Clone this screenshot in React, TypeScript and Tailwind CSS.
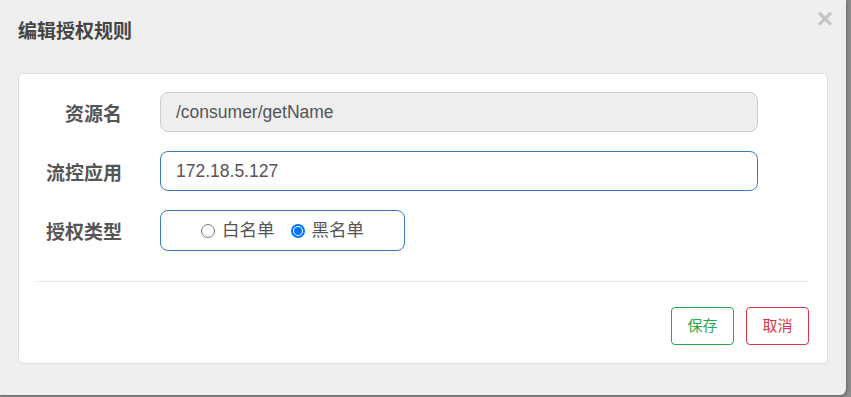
import React, { useState } from 'react';

const font = { fontFamily: '"Liberation Sans", "Noto Sans CJK SC", sans-serif' };

const Radio: React.FC<{ checked: boolean; label: string; onClick: () => void }> = ({ checked, label, onClick }) => (
  <label className="flex items-center cursor-pointer" onClick={onClick}>
    {checked ? (
      <span className="w-[14px] h-[14px] rounded-full border-[2px] border-[#0075ff] bg-white flex items-center justify-center">
        <span className="w-[8px] h-[8px] rounded-full bg-[#0075ff]" />
      </span>
    ) : (
      <span className="w-[14px] h-[14px] rounded-full border border-[#767676] bg-white" />
    )}
    <span className="ml-[7px] text-[17.5px] text-[#555]">{label}</span>
  </label>
);

export default function App() {
  const [mode, setMode] = useState<'white' | 'black'>('black');

  return (
    <div className="w-[851px] h-[397px] bg-[#8e8e8e] overflow-hidden" style={font}>
      <div className="w-[846px] h-[395px] bg-[#efefef] rounded-br-[6px] shadow-[1px_1px_3px_rgba(0,0,0,0.3)] relative">
        {/* header */}
        <div className="h-[73px] pl-[18px] flex items-center pb-[8px]">
          <h3 className="text-[19px] font-bold text-[#444]">编辑授权规则</h3>
        </div>
        <button className="absolute right-[13px] top-[5px] text-[28px] font-bold leading-none text-[#c4c4c4]">×</button>

        {/* body */}
        <div className="mx-[18px] h-[291px] bg-white border border-[#dddddd] rounded-[5px] px-[18px] pt-[18px]">
          <div className="flex flex-col gap-[19px]">
            <div className="flex items-center">
              <label className="w-[85px] pt-[6px] text-right text-[19px] font-bold text-[#555]">资源名</label>
              <div className="ml-[38px] w-[598px] h-[40px] bg-[#eeeeee] border border-[#cccccc] rounded-[8px] flex items-center px-[15px] text-[17.5px] text-[#555]">
                /consumer/getName
              </div>
            </div>
            <div className="flex items-center">
              <label className="w-[85px] pt-[6px] text-right text-[19px] font-bold text-[#555]">流控应用</label>
              <div className="ml-[38px] w-[598px] h-[40px] bg-white border border-[#3a7cbd] rounded-[8px] flex items-center px-[15px] text-[17.5px] text-[#555]">
                172.18.5.127
              </div>
            </div>
            <div className="flex items-center">
              <label className="w-[85px] pt-[6px] text-right text-[19px] font-bold text-[#555]">授权类型</label>
              <div className="ml-[38px] w-[245px] h-[41px] bg-white border border-[#3a7cbd] rounded-[8px] flex items-center justify-center gap-[16px]">
                <Radio checked={mode === 'white'} label="白名单" onClick={() => setMode('white')} />
                <Radio checked={mode === 'black'} label="黑名单" onClick={() => setMode('black')} />
              </div>
            </div>
          </div>

          <div className="mt-[30px] border-t border-[#e5e5e5]" />

          <div className="flex justify-end gap-[12px] mt-[25px]">
            <button className="w-[63px] h-[38px] bg-white border border-[#28a745] rounded-[4px] text-[15px] text-[#28a745]">保存</button>
            <button className="w-[63px] h-[38px] bg-white border border-[#dc3545] rounded-[4px] text-[15px] text-[#dc3545]">取消</button>
          </div>
        </div>
      </div>
    </div>
  );
}
